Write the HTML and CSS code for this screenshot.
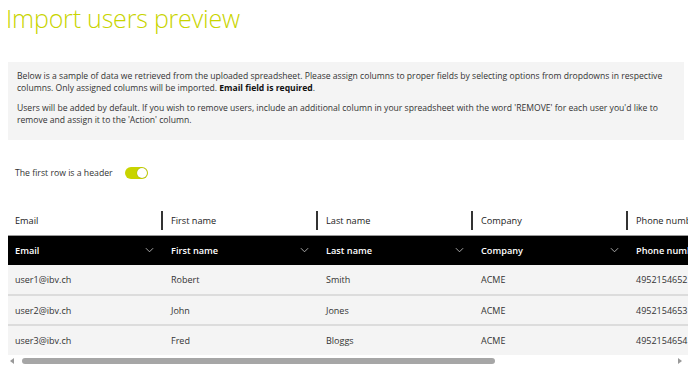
FILE: index.html
```html
<!DOCTYPE html>
<html lang="en">
<head>
    <meta charset="UTF-8">
    <meta name="viewport" content="width=device-width, initial-scale=1.0">
    <title>Import users preview</title>
    <link rel="stylesheet" href="styles.css">
</head>
<body>
    <div class="page">
        <h1 class="title">Import users preview</h1>

        <div class="info">
            <p>Below is a sample of data we retrieved from the uploaded spreadsheet. Please assign columns to proper fields by selecting options from dropdowns in respective columns. Only assigned columns will be imported. <b>Email field is required</b>.</p>
            <p>Users will be added by default. If you wish to remove users, include an additional column in your spreadsheet with the word 'REMOVE' for each user you'd like to remove and assign it to the 'Action' column.</p>
        </div>

        <div class="header-toggle">
            <span>The first row is a header</span>
            <span class="switch on"><span class="knob"></span></span>
        </div>

        <div class="preview">
            <div class="table-scroll">
                <table class="grid">
                    <thead>
                        <tr class="source-row">
                            <th><div class="label">Email</div></th>
                            <th><div class="label">First name</div></th>
                            <th><div class="label">Last name</div></th>
                            <th><div class="label">Company</div></th>
                            <th><div class="label">Phone number</div></th>
                        </tr>
                        <tr class="field-row">
                            <th><div class="select">Email <svg viewBox="0 0 10 6"><path d="M1 1l4 4 4-4"/></svg></div></th>
                            <th><div class="select">First name <svg viewBox="0 0 10 6"><path d="M1 1l4 4 4-4"/></svg></div></th>
                            <th><div class="select">Last name <svg viewBox="0 0 10 6"><path d="M1 1l4 4 4-4"/></svg></div></th>
                            <th><div class="select">Company <svg viewBox="0 0 10 6"><path d="M1 1l4 4 4-4"/></svg></div></th>
                            <th><div class="select">Phone number <svg viewBox="0 0 10 6"><path d="M1 1l4 4 4-4"/></svg></div></th>
                        </tr>
                    </thead>
                    <tbody>
                        <tr><td>user1@ibv.ch</td><td>Robert</td><td>Smith</td><td>ACME</td><td>4952154652</td></tr>
                        <tr><td>user2@ibv.ch</td><td>John</td><td>Jones</td><td>ACME</td><td>4952154653</td></tr>
                        <tr><td>user3@ibv.ch</td><td>Fred</td><td>Bloggs</td><td>ACME</td><td>4952154654</td></tr>
                    </tbody>
                </table>
            </div>
            <div class="scrollbar">
                <span class="arrow left"></span>
                <div class="track"><div class="thumb"></div></div>
                <span class="arrow right"></span>
            </div>
        </div>
    </div>
</body>
</html>
```

FILE: styles.css
```css
* {
    box-sizing: border-box;
}

body {
    margin: 0;
    font-family: 'Open Sans', sans-serif;
    color: #333;
    background: #fff;
}

.page {
    padding: 0 4px 0 8px;
}

.title {
    margin: 0 0 0 -2px;
    height: 62px;
    padding-top: 1px;
    font-size: 25px;
    font-weight: 300;
    color: #c8d400;
    letter-spacing: -0.2px;
}

.info {
    background: #f4f4f4;
    height: 78px;
    padding: 8px 9px;
    font-size: 8.6px;
    line-height: 12px;
    color: #333;
}

    .info p {
        margin: 0 0 8px 0;
    }

    .info b {
        color: #111;
    }

.header-toggle {
    display: flex;
    align-items: center;
    height: 66px;
    padding-left: 7px;
    font-size: 8.7px;
    color: #333;
}

.switch {
    margin-left: 12px;
    width: 23px;
    height: 12px;
    border-radius: 6px;
    background: #ddd;
    display: flex;
    align-items: center;
    padding: 0 1px;
}

    .switch.on {
        background: #c8d400;
        justify-content: flex-end;
    }

.knob {
    width: 10px;
    height: 10px;
    border-radius: 50%;
    background: #fff;
    box-shadow: 0 0 1px rgba(0,0,0,0.4);
}

.preview {
    margin-right: -4px;
}

.table-scroll {
    overflow: hidden;
}

.grid {
    border-collapse: collapse;
    table-layout: fixed;
    width: 775px;
    font-size: 9.2px;
}

    .grid th,
    .grid td {
        width: 155px;
        text-align: left;
        white-space: nowrap;
        padding: 0;
    }

.source-row th {
    height: 29px;
    font-weight: 400;
    color: #222;
    border-bottom: 1px solid #999;
}

.label {
    height: 19px;
    line-height: 19px;
    padding-left: 7px;
    border-right: 2px solid #333;
}

.source-row th + th .label {
    padding-left: 8px;
}

.source-row th:last-child .label {
    border-right: none;
}

.field-row th {
    height: 30px;
    background: #000;
    color: #fff;
    font-weight: 600;
}

.select {
    display: flex;
    justify-content: space-between;
    align-items: center;
    padding: 0 9px 0 7px;
}

.field-row th + th .select {
    padding-left: 8px;
}

    .select svg {
        width: 9px;
        height: 6px;
        fill: none;
        stroke: #bbb;
        stroke-width: 1;
    }

.grid td {
    height: 30px;
    background: #f4f4f4;
    border-bottom: 2px solid #dcdcdc;
    padding-left: 7px;
    font-size: 9px;
    color: #333;
}

    .grid td + td {
        padding-left: 8px;
    }

.grid tbody tr:last-child td {
    border-bottom: none;
}

.scrollbar {
    display: flex;
    align-items: center;
    height: 11px;
    padding: 0 6px 0 2px;
    gap: 8px;
}

.arrow {
    width: 0;
    height: 0;
    border-top: 3px solid transparent;
    border-bottom: 3px solid transparent;
}

    .arrow.left {
        border-right: 4px solid #999;
    }

    .arrow.right {
        border-left: 4px solid #999;
    }

.track {
    flex: 1;
}

.thumb {
    width: 473px;
    height: 6px;
    border-radius: 3px;
    background: #a6a6a6;
}
```
